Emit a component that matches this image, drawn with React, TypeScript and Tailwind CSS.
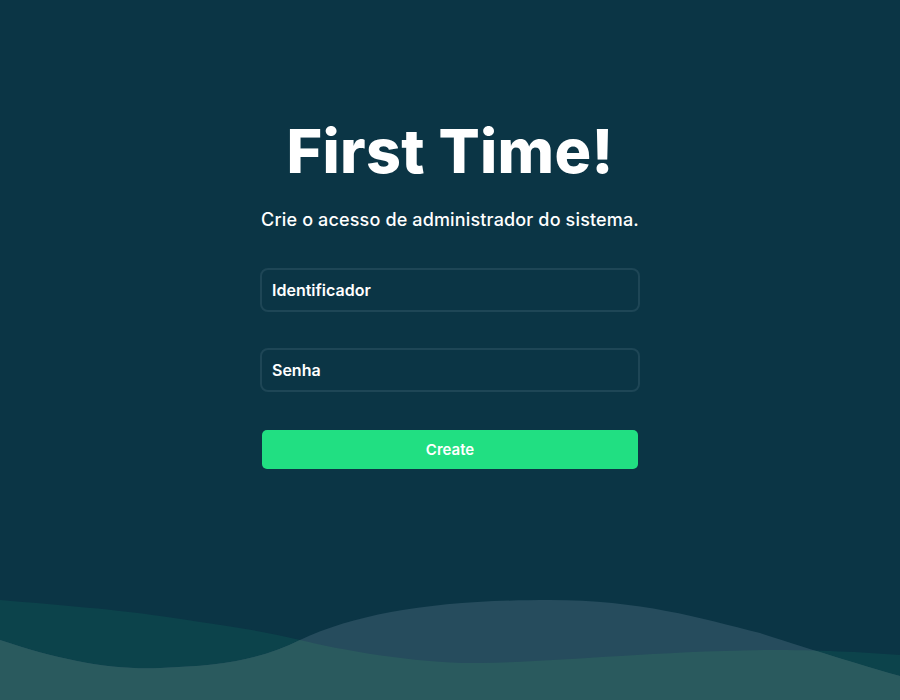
import React from "react";

function Waves() {
  const x = "M0,600 C60,605 120,610 160,616 C220,625 260,630 300,640 C340,650 420,664 480,663 C560,662 640,652 767,650 C820,650 860,652 900,655 L900,700 L0,700 Z";
  const y = "M0,640 C60,660 110,670 160,668 C220,666 260,660 300,640 C360,612 440,600 550,600 C640,600 700,618 760,633 C820,652 860,665 900,676 L900,700 L0,700 Z";
  return (
    <svg className="absolute left-0 top-0" width="900" height="700" viewBox="0 0 900 700">
      <defs>
        <clipPath id="clipX">
          <path d={x} />
        </clipPath>
      </defs>
      <path d={x} fill="#0c434b" />
      <path d={y} fill="#264c5d" />
      <path d={y} fill="#2a5a5e" clipPath="url(#clipX)" />
    </svg>
  );
}

export default function App() {
  return (
    <div
      className="relative w-[900px] h-[700px] overflow-hidden bg-[#0b3545] text-white"
      style={{ fontFamily: "Inter, 'Noto Sans', sans-serif" }}
    >
      <Waves />
      <div className="relative flex flex-col items-center pt-[117px]">
        <h1 className="text-[61px] leading-[68px] font-extrabold tracking-[0.3px]">First Time!</h1>
        <p className="mt-[21px] text-[18px] leading-[28px] font-medium tracking-[0.15px]">
          Crie o acesso de administrador do sistema.
        </p>
        <div className="mt-[34px] w-[380px] flex flex-col">
          <div className="h-[44px] rounded-[8px] border-2 border-[#1e4656] flex items-center px-[10px]">
            <span className="text-[16px] font-semibold">Identificador</span>
          </div>
          <div className="mt-[36px] h-[44px] rounded-[8px] border-2 border-[#1e4656] flex items-center px-[10px]">
            <span className="text-[16px] font-semibold">Senha</span>
          </div>
          <button className="mt-[38px] mx-[2px] h-[39px] pt-[2px] rounded-[5px] bg-[#21df82] text-white text-[15px] font-semibold">
            Create
          </button>
        </div>
      </div>
    </div>
  );
}
